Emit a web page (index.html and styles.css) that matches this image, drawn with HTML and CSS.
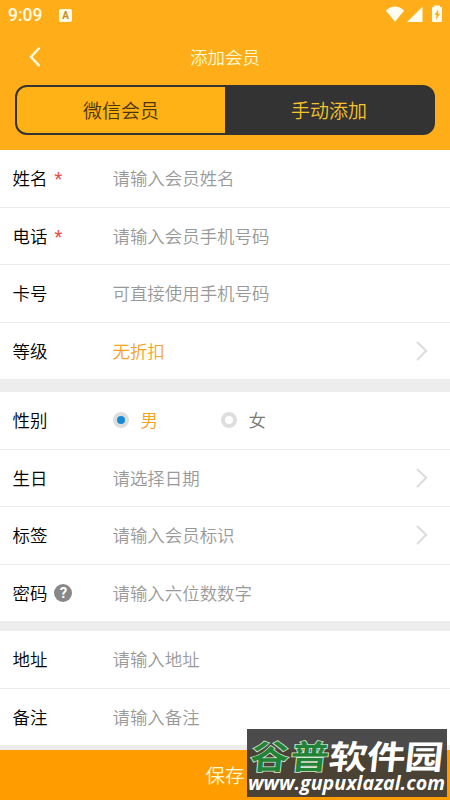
FILE: index.html
```html
<!DOCTYPE html>
<html lang="zh-CN">
<head>
<meta charset="utf-8">
<title>添加会员</title>
<link rel="stylesheet" href="styles.css">
</head>
<body>
<header class="header">
  <div class="status">
    <span class="time">9:09</span>
    <span class="badge">A</span>
    <svg class="signals" width="60" height="20" viewBox="0 0 60 20" fill="#fffdf0">
      <path d="M.8 5.5Q10 -2.4 19.2 5.5L10 16.8Z"/>
      <path d="M22 17L37.5 1.8V17Z"/>
      <path fill-rule="evenodd" d="M49 2V.5h6V2h1q1 0 1 1v13q0 1-1 1h-8q-1 0-1-1V3q0-1 1-1ZM53.3 4L49.5 10h2L51 15l4-6.5h-2.1Z"/>
    </svg>
  </div>
  <div class="nav">
    <svg class="back" width="14" height="22" viewBox="0 0 14 22"><path d="M11.8 1.5L4 9.8l7.8 8.5"/></svg>
    <h1 class="title">添加会员</h1>
  </div>
  <div class="tabs">
    <div class="tab">微信会员</div>
    <div class="tab active">手动添加</div>
  </div>
</header>
<main class="form">
  <section class="group first">
    <div class="row"><label>姓名<b class="star">*</b></label><span class="hint">请输入会员姓名</span></div>
    <div class="row"><label>电话<b class="star">*</b></label><span class="hint">请输入会员手机号码</span></div>
    <div class="row"><label>卡号</label><span class="hint">可直接使用手机号码</span></div>
    <div class="row"><label>等级</label><span class="value">无折扣</span><svg class="arrow" viewBox="0 0 12 22"><path d="M1.5 2.5l8.7 8.3-8.7 8.7"/></svg></div>
  </section>
  <section class="group second">
    <div class="row"><label>性别</label><i class="radio on"></i><span class="choice value">男</span><i class="radio"></i><span class="choice">女</span></div>
    <div class="row"><label>生日</label><span class="hint">请选择日期</span><svg class="arrow" viewBox="0 0 12 22"><path d="M1.5 2.5l8.7 8.3-8.7 8.7"/></svg></div>
    <div class="row"><label>标签</label><span class="hint">请输入会员标识</span><svg class="arrow" viewBox="0 0 12 22"><path d="M1.5 2.5l8.7 8.3-8.7 8.7"/></svg></div>
    <div class="row"><label>密码<span class="help">?</span></label><span class="hint">请输入六位数数字</span></div>
  </section>
  <section class="group third">
    <div class="row"><label>地址</label><span class="hint">请输入地址</span></div>
    <div class="row"><label>备注</label><span class="hint">请输入备注</span></div>
  </section>
</main>
<footer class="save">保存</footer>
<svg class="watermark" width="200" height="68" viewBox="0 0 200 68">
  <g class="brand" transform="translate(0 39.5) skewX(-6) scale(1.17 1)">
    <text class="green" x="2" y="0" textLength="67">谷普</text>
    <text x="69" y="0" textLength="98">软件园</text>
  </g>
  <text class="site" x="1" y="61" textLength="197" lengthAdjust="spacingAndGlyphs">www.gupuxlazal.com</text>
</svg>
</body>
</html>
```

FILE: styles.css
```css
* { box-sizing: border-box; }
body {
  margin: 0;
  width: 450px;
  height: 800px;
  overflow: hidden;
  position: relative;
  display: flex;
  flex-direction: column;
  background: #ededed;
  font-family: "Noto Sans CJK SC", sans-serif;
  font-size: 17.45px;
  font-weight: 350;
  line-height: 24px;
}
.header { height: 150px; background: #ffae19; flex: none; }
.status { height: 31px; padding: 0 5px 0 8px; display: flex; align-items: center; }
.time { font: 500 17.5px/31px Roboto, sans-serif; color: #fffbe5; width: 51px; }
.badge {
  width: 13px;
  height: 13px;
  border-radius: 2px;
  background: #fffbe8;
  color: #c98c22;
  font: 700 10px/13px Roboto, sans-serif;
  text-align: center;
}
.signals { margin-left: auto; margin-top: -3px; position: relative; top: 1px; }
.nav { height: 54px; display: grid; grid-template-columns: 60px 1fr 60px; align-items: center; }
.back { margin-left: 27px; fill: none; stroke: #fff9dc; stroke-width: 2.5; stroke-linecap: round; stroke-linejoin: round; }
.title { margin: -2px 0 0; font-size: 17.4px; font-weight: 350; color: #fffbd9; text-align: center; }
.tabs {
  height: 50px;
  margin: 0 15px;
  border: 2px solid #333;
  border-radius: 12px;
  display: flex;
  background: linear-gradient(90deg, #ffb215 50%, #333 50%) border-box;
  font-size: 19px;
  line-height: 46px;
}
.tab { flex: 1; text-align: center; color: #4b350b; }
.active { color: #f8c32c; }
.group { display: flex; flex-direction: column; background: #fff; }
.first { height: 229px; margin-bottom: 13px; }
.second { height: 229px; margin-bottom: 10px; }
.third { height: 114px; margin-bottom: 5px; }
.row { flex: 1; display: flex; align-items: center; padding: 0 22px 0 12.5px; }
.row + .row { border-top: 1px solid #ebebeb; }
.row label { width: 100px; display: flex; align-items: center; color: #000; }
.star { margin: 2px 0 0 7px; font: 400 18px/20px Roboto, sans-serif; color: #ed4b48; }
.hint { color: #999; }
.value { color: #f5a21c; }
.arrow { width: 12px; height: 22px; margin-left: auto; fill: none; stroke: #dcdcdc; stroke-width: 2; stroke-linecap: round; stroke-linejoin: round; }
.radio { width: 16px; height: 16px; border: 4px solid #dedede; border-radius: 50%; background: #fff; }
.on { background: #168bd3; }
.choice { width: 80px; margin-left: 12px; color: #777; }
.choice.value { color: #f5a21c; }
.help {
  width: 18px;
  height: 18px;
  margin-left: 7px;
  border-radius: 50%;
  background: #888;
  color: #fff;
  font: 700 15px/18px Roboto, sans-serif;
  text-align: center;
}
.save { height: 50px; flex: none; background: #ff9d00; color: #fff8dc; font-size: 19.5px; line-height: 50px; text-align: center; }
.watermark { position: absolute; left: 247px; top: 729px; background: linear-gradient(#4b4b4b 21px, #4a4234 21px); }
.brand { font: 700 33px "Noto Sans CJK SC", sans-serif; fill: #fff; }
.green { fill: #218336; stroke: #d8e6d2; stroke-width: 1.6px; paint-order: stroke; }
.site { font: italic 700 19px "Open Sans", sans-serif; fill: #fff; }
```
